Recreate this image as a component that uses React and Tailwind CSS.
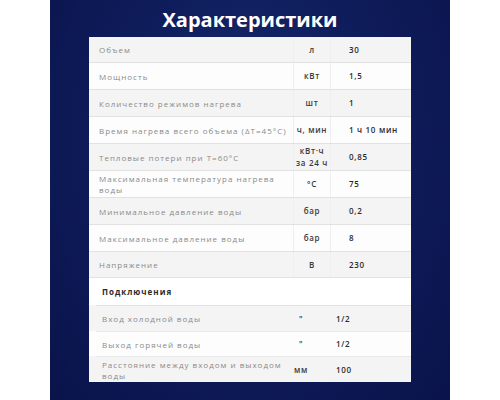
export default function App() {
  const rows = [
    ["Объем", "л", "30", 26],
    ["Мощность", "кВт", "1,5", 27],
    ["Количество режимов нагрева", "шт", "1", 27],
    ["Время нагрева всего объема (ΔT=45°C)", "ч, мин", "1 ч 10 мин", 27],
    ["Тепловые потери при T=60°C", "кВт·ч\nза 24 ч", "0,85", 27],
    ["Максимальная температура нагрева воды", "°С", "75", 27],
    ["Минимальное давление воды", "бар", "0,2", 27],
    ["Максимальное давление воды", "бар", "8", 27],
    ["Напряжение", "В", "230", 26],
  ];
  const rows2 = [
    ["Вход холодной воды", "\"", "1/2", 26],
    ["Выход горячей воды", "\"", "1/2", 25],
    ["Расстояние между входом и выходом воды", "мм", "100", 26],
  ];
  const font = { fontFamily: '"Open Sans", "DejaVu Sans", sans-serif' };
  return (
    <div className="w-[500px] h-[400px] bg-white flex justify-center" style={font}>
      <div className="w-[400px] h-[400px] bg-[radial-gradient(ellipse_at_50%_35%,#1a2d6e_0%,#0f1d5c_45%,#0a134a_100%)] flex flex-col items-center">
        <div className="h-[37px] flex items-center justify-center text-white font-bold text-[20px] leading-none pt-[2px]">
          Характеристики
        </div>
        <div className="w-[322px] flex flex-col">
          {rows.map(([l, u, v, h], i) => (
            <div
              key={i}
              className={`flex border-b border-[#e2e2e2] ${i % 2 === 0 ? "bg-[#f4f4f4]" : "bg-[#fdfdfd]"}`}
              style={{ height: h }}
            >
              <div className="w-[204px] pl-[10px] flex items-center text-[8px] leading-[11px] tracking-[1px] text-[#8a8a8a]">
                {l}
              </div>
              <div className="w-[38px] flex items-center justify-center text-center whitespace-pre-line border-l border-r border-[#efefef] text-[8px] leading-[12px] tracking-[0.7px] font-semibold text-[#3a3a3a]">
                {u}
              </div>
              <div className="flex-1 pl-[18px] flex items-center text-[8px] tracking-[0.7px] font-semibold text-[#2a2a2a]">
                {v}
              </div>
            </div>
          ))}
          <div className="h-[27px] bg-white flex items-center pl-[13px] text-[8px] tracking-[1px] font-bold text-[#2a2a2a]">
            Подключения
          </div>
          {rows2.map(([l, u, v, h], i) => (
            <div
              key={i}
              className={`pl-[7px] ${i % 2 === 0 ? "bg-[#f4f4f4]" : "bg-[#fdfdfd]"}`}
              style={{ height: h }}
            >
              <div className={`h-full flex ${i === 0 ? "border-t border-[#e2e2e2]" : "border-t border-[#e8e8e8]"}`}>
                <div className="w-[190px] pl-[6px] flex items-center text-[8px] leading-[11px] tracking-[1px] text-[#8a8a8a]">
                  {l}
                </div>
                <div className="w-[30px] flex items-center justify-center text-[8px] tracking-[0.7px] font-semibold text-[#3a3a3a]">
                  {u}
                </div>
                <div className="flex-1 pl-[20px] flex items-center text-[8px] tracking-[0.7px] font-semibold text-[#2a2a2a]">
                  {v}
                </div>
              </div>
            </div>
          ))}
        </div>
      </div>
    </div>
  );
}
